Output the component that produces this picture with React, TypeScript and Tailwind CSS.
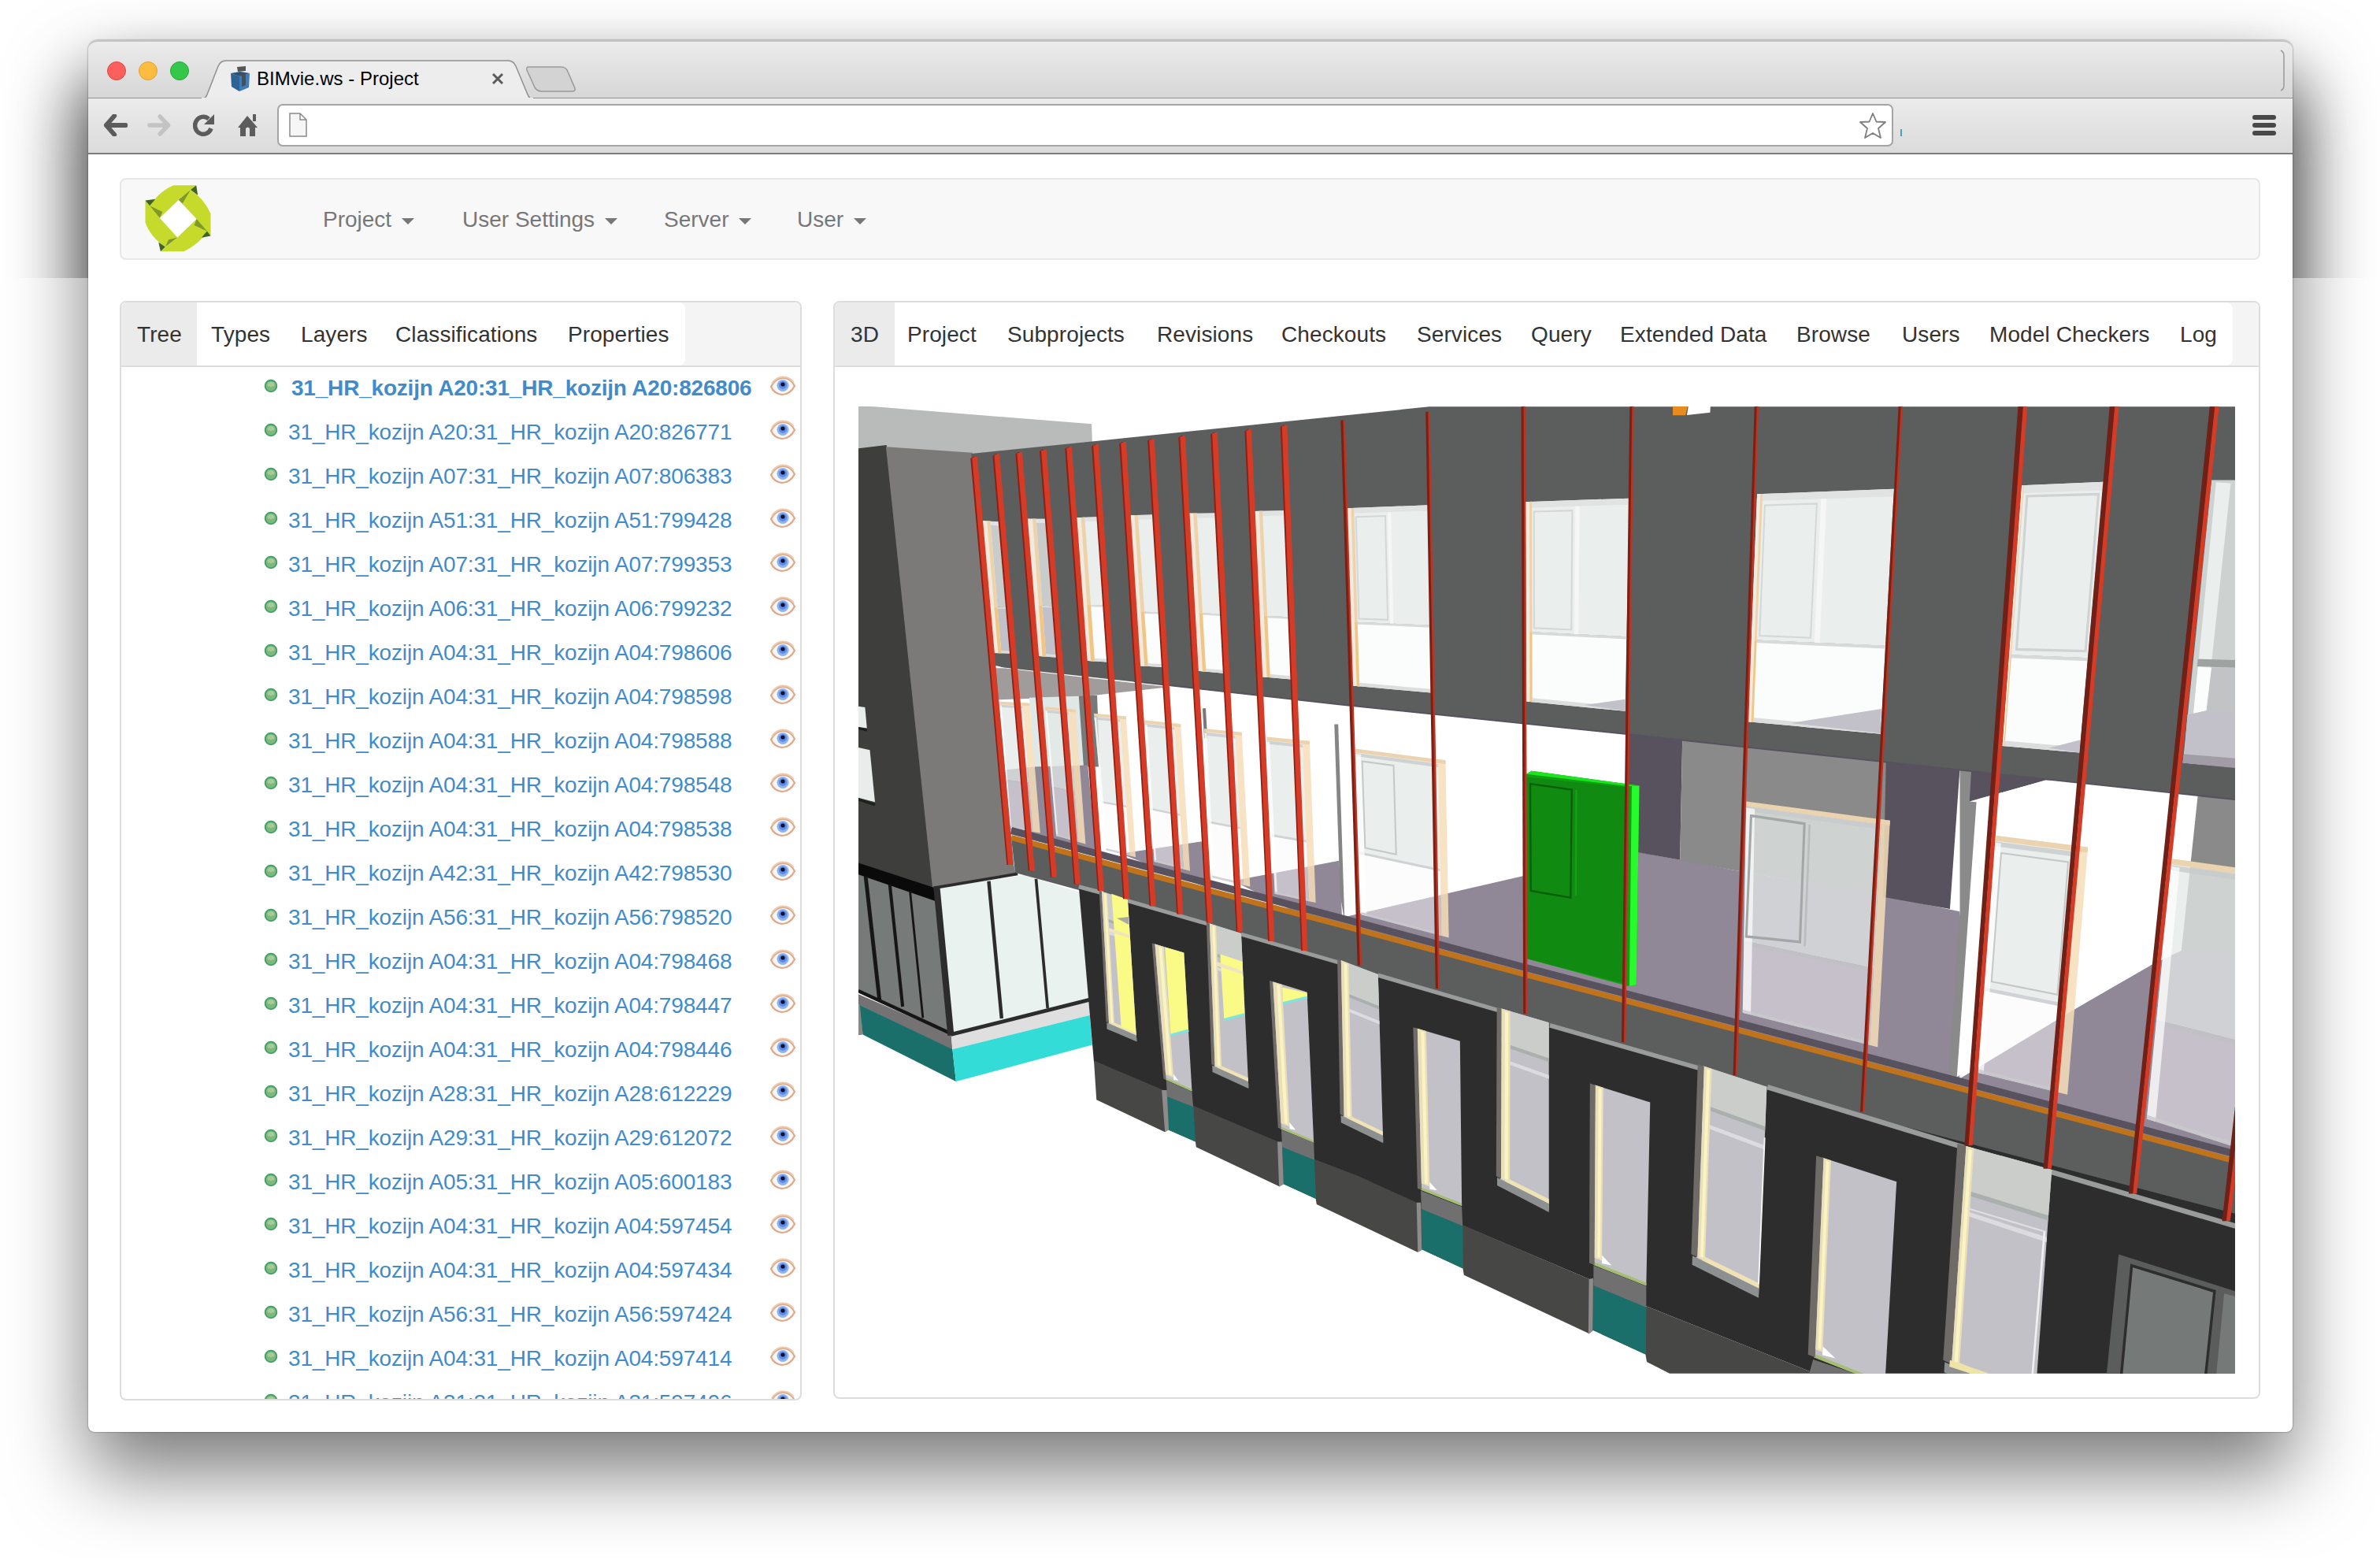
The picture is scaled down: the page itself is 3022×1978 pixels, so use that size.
import React from "react";

type Pt = [number, number];
type Quad = [Pt, Pt, Pt, Pt];

const rows: string[] = [
  "A20:826806", "A20:826771", "A07:806383", "A51:799428", "A07:799353", "A06:799232",
  "A04:798606", "A04:798598", "A04:798588", "A04:798548", "A04:798538", "A42:798530",
  "A56:798520", "A04:798468", "A04:798447", "A04:798446", "A28:612229", "A29:612072",
  "A05:600183", "A04:597454", "A04:597434", "A56:597424", "A04:597414", "A31:597406",
];

const Poly = ({ f, p, s, w }: { f: string; p: string; s?: string; w?: number }) => (
  <polygon points={p} fill={f} stroke={s} strokeWidth={w} />
);
const Line = ({ c, p, w }: { c: string; p: string; w: number }) => (
  <polyline points={p} fill="none" stroke={c} strokeWidth={w} />
);

/* Point inside a quad at fractions u (across) and v (down). */
const at = (q: Quad, u: number, v: number): Pt => {
  const [tl, tr, br, bl] = q;
  const m = (i: 0 | 1) =>
    (1 - v) * ((1 - u) * tl[i] + u * tr[i]) + v * ((1 - u) * bl[i] + u * br[i]);
  return [m(0), m(1)];
};
const sub = (q: Quad, u0: number, v0: number, u1: number, v1: number) =>
  [at(q, u0, v0), at(q, u1, v0), at(q, u1, v1), at(q, u0, v1)].map((a) => a.join(",")).join(" ");

/* Window in the upper facade: glass over parapet, wooden jamb at the left. */
const Upper = ({ q, mid = 0.65, jamb = 0.1, glass = "#eaeeed", low = "#fbfdfc", door = 0 }: {
  q: Quad; mid?: number; jamb?: number; glass?: string; low?: string; door?: number;
}) => (
  <g>
    <Poly f={glass} p={sub(q, 0, 0, 1, mid)} />
    <Poly f={low} p={sub(q, 0, mid, 1, 1)} />
    <Poly f="#e0e3e2" p={sub(q, 0, 0, 1, 0.03)} />
    <Poly f="#d6dad9" p={sub(q, 0, mid, 1, mid + 0.012)} />
    <Poly f="#dcdedd" p={sub(q, 0, 0.98, 1, 1)} />
    <Poly f="#f3e9dc" p={sub(q, 0, 0, jamb, 1)} />
    <Poly f="#ecd3ac" p={sub(q, jamb * 0.6, 0, jamb, mid)} />
    <Poly f="#f1c685" p={sub(q, jamb * 0.6, mid, jamb, 1)} />
    {door > 0 && (
      <g>
        <polygon points={sub(q, jamb + 0.02, 0.05, door, mid - 0.02)} fill="none" stroke="#d3d7d6" strokeWidth={5} />
        <Poly f="#f5f7f6" p={sub(q, door + 0.03, 0.03, door + 0.07, mid)} />
      </g>
    )}
  </g>
);

/* Window on the recessed storey: translucent, wooden frame on top and at the right. */
const Recessed = ({ q, mid = 0.62, side = 0.2, door = 0 }: { q: Quad; mid?: number; side?: number; door?: number }) => (
  <g>
    <Poly f="rgba(227,233,231,.76)" p={sub(q, 0, 0.02, 1 - side, mid)} />
    <Poly f="rgba(249,250,252,.5)" p={sub(q, 0, mid, 1 - side, 1)} />
    <Poly f="rgba(190,193,195,.7)" p={sub(q, 0, mid, 1 - side, mid + 0.015)} />
    <Poly f="rgba(200,203,204,.8)" p={sub(q, 0, 0.025, 1 - side, 0.045)} />
    <Poly f="rgba(255,255,255,.7)" p={sub(q, 0, 0.03, 0.06, 1)} />
    <Poly f="rgba(200,200,205,.8)" p={sub(q, 0, 0.985, 1 - side, 1)} />
    <Poly f="rgba(246,222,186,.85)" p={sub(q, 1 - side, 0, 1, 1)} />
    <Poly f="#ead3ae" p={sub(q, 0, 0, 1, 0.022)} />
    {door > 0 && (
      <polygon points={sub(q, 0.07, 0.07, door, mid - 0.03)} fill="none" stroke="#c3c8c7" strokeWidth={5} />
    )}
  </g>
);

/* Opening in the dark plinth storey. */
const Lower = ({ q, kind, jamb = 0.22 }: { q: Quad; kind: "door" | "window"; jamb?: number }) => (
  <g>
    <Poly f="#c3c1c8" p={sub(q, 0, 0, 1, 1)} />
    {kind === "window" && (
      <g>
        <Poly f="#cacdca" p={sub(q, 0, 0, 1, 0.19)} />
        <Poly f="#aab0ae" p={sub(q, 0, 0.19, 1, 0.21)} />
        <Poly f="#dcdbdf" p={sub(q, 0, 0.28, 1, 0.3)} />
        <Poly f="#efe2b4" p={sub(q, 0.1, 0.94, 1, 0.965)} />
        <Poly f="#8c9090" p={sub(q, -0.06, 0.965, 1, 1.01)} />
      </g>
    )}
    {kind === "door" && <Poly f="#a6bd74" p={sub(q, 0, 0.985, 1, 1.002)} />}
    <Poly f="#6e6b68" p={sub(q, -0.08, 0, 0.02, kind === "door" ? 1 : 0.96)} />
    <Poly f="#e9dfb8" p={sub(q, 0.02, 0, jamb, 0.96)} />
    <Poly f="#faf3c4" p={sub(q, jamb * 0.45, 0.01, jamb * 0.8, 0.95)} />
    {kind === "door" && (
      <polygon points={[at(q, jamb, 0.93), at(q, jamb + 0.18, 0.965), at(q, jamb, 0.975)].map((a) => a.join(",")).join(" ")} fill="#fff" />
    )}
  </g>
);

const wideBeams: [Pt, Pt][] = [
  [[384, 198], [496, 1465]], [[453, 190], [563, 1483]], [[524, 184], [632, 1503]],
  [[599, 176], [705, 1525]], [[678, 168], [779, 1546]], [[761, 160], [858, 1571]],
  [[847, 152], [940, 1593]], [[935, 143], [1025, 1618]], [[1031, 133], [1117, 1645]],
  [[1131, 123], [1210, 1673]], [[1237, 113], [1309, 1702]], [[1348, 100], [1412, 1732]],
];
const thinBeams: [Pt, Pt][] = [
  [[13, 82], [69, 1778]], [[295, 56], [328, 1850]], [[612, 40], [619, 1928]],
  [[972, 40], [945, 2017]], [[1386, 40], [1315, 2120]], [[1864, 40], [1737, 2233]],
];
const thickBeams: [Pt, Pt][] = [
  [[753, 40], [574, 2338]], [[1057, 40], [836, 2410]], [[1389, 40], [1119, 2488]], [[1474, 2210], [1429, 2573]],
];

const A = "translate(1080 500) scale(.408163)";
const B = "translate(1700 500) scale(.382653 .408163)";
const C = "translate(2280 500) scale(.382653 .408163)";
const D = "translate(1080 1080) scale(.408163)";
const E = "translate(1700 1130) scale(.382653 .408163)";
const F = "translate(2280 1130) scale(.382653 .408163)";

const rail = "1284,1063.4 1431,1103 1700,1173.9 1933,1236.3 2205,1307.3 2500,1384.9 2838,1474";

const Building = () => (
  <svg width="1748" height="1228" viewBox="1090 516 1748 1228" className="block">
    <rect x="1090" y="516" width="1748" height="1228" fill="#fff" />
    {/* rooms behind the recessed storey */}
    <g transform={A}>
      <Poly f="#9f9c9b" p="450,850 990,912 720,942 450,952" />
      <Poly f="#dfe8e6" p="556,945 712,940 728,1158 572,1162" />
      <Poly f="#777a79" p="710,940 767,938 775,1160 725,1160" />
      <Poly f="#908797" p="480,1170 570,1160 738,1155 765,1440 500,1370" />
      <Poly f="#908797" p="840,1430 1095,1392 1120,1540" />
      <Poly f="#908797" p="1190,1515 1520,1452 1530,1650 1440,1640" />
      <Poly f="#777a79" p="1095,978 1105,978 1110,1070 1100,1070" />
      <Poly f="#858585" p="1505,1028 1517,1028 1537,1640 1523,1560" />
    </g>
    <g transform={B}>
      <Poly f="#908797" p="0,1640 30,1625 610,1500 965,1420 1132,1450 1330,1485 1816,1562 2060,1610 2060,2130 2740,1745 2980,1700 2980,2400 1330,2010 0,1680" />
      <Poly f="#57525e" p="955,1052 1140,1072 1132,1450 955,1420" />
      <Poly f="#8a8a8a" p="1140,1072 1820,1140 1806,1562 1330,1485 1132,1452" />
    </g>
    <g transform={C}>
      <Poly f="#57525e" p="300,1140 545,1165 512,1602 290,1565" />
      <Poly f="#8a8a8a" p="545,1165 583,1170 606,1265 540,2124 508,2118 545,1610" />
      <Poly f="#57525e" p="583,1170 970,1205 830,1202 577,1268" />
      <Poly f="#fff" p="577,1268 830,1202 960,1208 1335,1245 1280,1732 1180,1777 535,2125 600,1270" />
      <Poly f="#8a8a8a" p="1335,1245 1460,1255 1460,1740 1280,1732" />
      <Poly f="#908797" p="1280,1732 1460,1738 1460,2340 1130,2260 1180,1777" />
    </g>
    {/* recessed windows */}
    <g transform={A}>
      <Recessed q={[[463, 957], [557, 962], [590, 1366], [495, 1350]]} side={0.24} />
      <Recessed q={[[605, 973], [700, 982], [731, 1400], [640, 1375]]} side={0.24} />
      <Recessed q={[[757, 994], [857, 1003], [887, 1441], [795, 1420]]} side={0.2} mid={0.64} />
      <Recessed q={[[915, 1015], [1027, 1027], [1056, 1484], [945, 1455]]} side={0.18} />
      <Recessed q={[[1100, 1041], [1217, 1053], [1243, 1533], [1125, 1505]]} side={0.18} />
      <Recessed q={[[1295, 1067], [1428, 1080], [1447, 1583], [1320, 1555]]} side={0.17} />
    </g>
    <g transform={B}>
      <Recessed q={[[55, 1104], [354, 1140], [365, 1692], [75, 1620]]} side={0.085} door={0.42} />
      <Recessed q={[[1352, 1268], [1829, 1327], [1788, 2032], [1340, 1925]]} side={0.06} mid={0.66} />
      <polygon points="1368,1312 1545,1337 1530,1705 1352,1688" fill="none" stroke="#a3a8a7" strokeWidth="8" />
      <Line c="#b9bdbc" w={7} p="1562,1340 1546,1718" />
      <Poly f="#119e13" p="622,1183 640,1173 997,1219 987,1838 958,1842 625,1757" />
      <Poly f="#118a12" p="622,1192 950,1224 950,1835 625,1757" />
      <Poly f="#1be51e" p="622,1183 640,1173 997,1219 962,1221" />
      <Poly f="#27fb2c" p="972,1221 997,1219 987,1838 964,1842" />
      <polygon points="635,1213 773,1231 769,1567 637,1546" fill="none" stroke="#085e09" strokeWidth="6" />
      <Line c="#16a018" w={6} p="788,1232 786,1560" />
    </g>
    <g transform={C}>
      <Recessed q={[[665, 1374], [970, 1410], [902, 2180], [606, 2112]]} side={0.11} mid={0.64} door={0.8} />
      <Recessed q={[[1250, 1446], [1700, 1505], [1650, 2400], [1165, 2255]]} side={0.05} mid={0.62} />
    </g>
    {/* upper facade */}
    <g transform={A}>
      <Poly f="#b8bbba" p="24,38 75,40 750,94 752,160 380,190 110,170 24,172" />
      <Poly f="#3e3e3c" p="24,170 112,159 258,1540 24,1465" />
      <Poly f="#7c7a78" p="110,165 378,183 392,200 508,1465 514,1497 255,1538" />
      <Poly f="#e8ecea" p="24,972 45,975 51,1040 24,1036" />
      <Poly f="#e8ecea" p="24,1100 60,1108 76,1270 24,1256" />
      <Line c="#1f1f1d" w={8} p="24,1262 76,1278" />
      <Line c="#1f1f1d" w={8} p="24,1040 51,1046" />
    </g>
    <g transform={B}>
      <Poly f="#5c5e5d" p="-1220,186 -820,148 300,40 2974,40 2974,1262 1345,1098 950,1058 0,966 -1142,848" />
      <Line c="#57525e" w={5} p="-680,894 0,966 950,1058 1345,1098 2974,1262" />
      <Poly f="#e88c22" p="1108,38 1158,38 1150,67 1108,67" />
      <Poly f="#fff" p="1160,38 1233,38 1232,58 1155,66" />
    </g>
    <g transform={A}>
      <Upper q={[[408, 395], [468, 398], [500, 808], [444, 806]]} jamb={0.45} glass="#c8cccb" low="#c2c0c8" />
      <Upper q={[[550, 389], [610, 389], [642, 820], [580, 815]]} jamb={0.45} mid={0.63} glass="#c8cccb" low="#c2c0c8" />
      <Upper q={[[700, 385], [768, 383], [800, 834], [730, 830]]} jamb={0.42} mid={0.61} />
      <Upper q={[[866, 378], [940, 376], [970, 850], [898, 846]]} jamb={0.38} mid={0.64} />
      <Upper q={[[1050, 372], [1135, 371], [1160, 869], [1080, 862]]} jamb={0.32} mid={0.63} />
      <Upper q={[[1255, 365], [1350, 363], [1370, 888], [1280, 880]]} jamb={0.28} mid={0.63} />
      <Poly f="#fff" p="452,845 480,853 452,853" />
    </g>
    <g transform={B}>
      <Upper q={[[26, 356], [297, 346], [306, 930], [45, 908]]} door={0.47} mid={0.64} jamb={0.09} />
      <Upper q={[[620, 336], [964, 325], [950, 987], [622, 957]]} door={0.45} mid={0.65} jamb={0.06} />
      <Poly f="#c2c0c8" p="815,968 950,950 950,986" />
      <Upper q={[[1388, 312], [1842, 296], [1798, 1058], [1358, 1020]]} door={0.44} mid={0.64} jamb={0.04} />
      <Poly f="#c2c0c8" p="1500,1024 1800,980 1798,1056" />
    </g>
    <g transform={C}>
      <Upper q={[[750, 285], [1022, 274], [942, 1116], [686, 1095]]} mid={0.65} jamb={0.03} />
      <polygon points="768,318 1005,312 962,800 733,795" fill="none" stroke="#cfd3d2" strokeWidth="8" />
      <Poly f="#c2c0c8" p="840,1102 945,1076 942,1116" />
      <Poly f="#cdd1d0" p="1380,268 1460,268 1460,1162 1285,1148" />
      <Poly f="#eaeeed" p="1395,275 1444,278 1363,985 1320,995" />
      <Poly f="#9ea2a1" p="1335,825 1460,828 1460,852 1332,848" />
      <Poly f="#c2c3c4" p="1378,852 1460,852 1460,990 1363,985" />
      <Poly f="#fbfdfc" p="1335,850 1380,852 1363,985 1320,995" />
      <Poly f="#c2c0c8" p="1300,998 1370,984 1460,990 1460,1135 1290,1120" />
      <Poly f="#a29ca6" p="1288,1120 1460,1134 1460,1164 1284,1148" />
    </g>
    {/* glazed corner pavilion */}
    <g transform={D}>
      <Poly f="#767a78" p="24,60 264,150 302,562 24,437" />
      <Poly f="#0a0a0a" p="24,38 262,116 264,157 24,74" />
      <Line c="#161616" w={12} p="47,80 90,465" />
      <Line c="#161616" w={10} p="122,105 162,485" />
      <Line c="#161616" w={7} p="185,125 225,520" />
      <Poly f="#e9f2ef" p="270,116 540,76 715,130 742,470 318,570" />
      <Line c="#2c2c2c" w={11} p="430,95 470,522" />
      <Line c="#2c2c2c" w={9} p="577,88 613,490" />
      <Poly f="#747272" p="24,446 313,572 317,620 24,478" />
      <Poly f="#888" p="24,478 32,480 38,572 24,574" />
      <Poly f="#1a6f6b" p="29,480 317,618 328,718 38,572" />
      <Poly f="#dfdfdf" p="313,576 742,470 744,514 317,620" />
      <Poly f="#33dcd7" p="317,618 744,512 752,604 328,718" />
      <Line c="#161616" w={11} p="24,436 310,568" />
      <Line c="#2c2c2c" w={12} p="312,572 742,464" />
      <Line c="#2c2c2c" w={9} p="258,116 520,72" />
      <Line c="#2c2c2c" w={20} p="268,114 312,575" />
    </g>
    {/* balcony edge */}
    <polygon
      points={rail + " 2838,1556 2605,1488 2492,1458 2280,1392 2159,1358 1903,1285 1696,1224 1533,1177 1370,1130 1289,1108"}
      fill="#5c5e5d"
    />
    <polyline points={rail} fill="none" stroke="#57525e" strokeWidth="9" transform="translate(0 -9)" />
    <polyline points={rail} fill="none" stroke="#c0731a" strokeWidth="7" />
    {/* plinth storey */}
    <g transform={D}>
      <Poly f="#2d2d2d" p="710,112 1110,228 1520,350 2017,498 2646,680 3230,845 4500,1180 4500,1626 3000,1626 2475,1417 2297,1332 1905,1166 1568,1012 1443,962 1330,907 1066,797 757,657" />
      <Poly f="#474745" p="757,653 972,744 1066,793 1330,905 1443,960 1575,1010 1767,1097 1905,1165 2297,1332 2475,1417 3000,1626 2548,1626 2477,1590 2473,1567 2310,1492 2297,1502 1908,1320 1905,1300 1776,1240 1764,1249 1450,1100 1447,1083 1345,1035 1335,1045 1075,922 1073,905 988,868 978,875 765,775" />
      <Line c="#9a9c9b" w={13} p="710,112 785,132" />
      <Line c="#9a9c9b" w={12} p="862,156 1115,229" />
      <Line c="#9a9c9b" w={12} p="1215,260 1522,349" />
      <Lower kind="window" q={[[780, 127], [862, 152], [890, 590], [803, 552]]} />
      <Poly f="#fafa86" p="812,134 862,152 888,566 842,548" />
      <Poly f="#efe3c0" p="803,240 868,262 868,272 803,252" />
      <Poly f="#a8aaa0" p="828,210 865,206 866,230" />
      <Poly f="#8c9090" p="798,545 890,584 890,592 798,555" />
      <Lower kind="door" q={[[945, 290], [1037, 317], [1062, 748], [980, 712]]} jamb={0.32} />
      <Poly f="#fafa86" p="978,300 1037,317 1051,556 996,572" />
      <Line c="#7fe3e0" w={8} p="995,574 1052,559" />
      <Lower kind="window" q={[[1115, 226], [1215, 257], [1238, 735], [1132, 687]]} />
      <Poly f="#fafa86" p="1150,322 1219,345 1226,508 1162,525" />
      <Poly f="#efe3c0" p="1138,345 1220,375 1220,385 1138,358" />
      <Line c="#7fe3e0" w={8} p="1162,526 1226,509" />
      <Lower kind="door" q={[[1312, 407], [1420, 440], [1441, 908], [1338, 865]]} jamb={0.28} />
      <Poly f="#fafa86" p="1343,425 1420,442 1421,454 1345,472" />
      <Line c="#7fe3e0" w={8} p="1345,475 1421,456" />
      <Poly f="#707070" p="982,715 1062,750 1066,798 985,766" />
      <Poly f="#1a6f6b" p="985,765 1067,797 1073,905 988,868" />
      <Poly f="#8f8b8b" p="968,745 984,745 990,868 978,875" />
      <Poly f="#707070" p="1340,868 1441,908 1443,963 1343,924" />
      <Poly f="#1a6f6b" p="1343,922 1443,962 1448,1083 1346,1037" />
      <Poly f="#8f8b8b" p="1328,905 1342,905 1347,1038 1333,1045" />
    </g>
    <g transform={E}>
      <Line c="#9a9c9b" w={13} p="130,265 532,375" />
      <Line c="#9a9c9b" w={14} p="700,421 1203,556" />
      <Line c="#9a9c9b" w={16} p="1422,613 2073,800" />
      <Lower kind="window" q={[[5, 218], [130, 262], [147, 782], [15, 722]]} />
      <Lower kind="door" q={[[258, 430], [402, 470], [408, 982], [272, 932]]} />
      <Lower kind="window" q={[[537, 368], [697, 412], [697, 996], [535, 918]]} jamb={0.2} />
      <Lower kind="door" q={[[848, 606], [1033, 660], [1020, 1230], [845, 1165]]} jamb={0.16} />
      <Lower kind="window" q={[[1208, 547], [1420, 612], [1393, 1262], [1185, 1165]]} jamb={0.14} />
      <Poly f="#707070" p="272,935 408,985 411,1046 274,993" />
      <Poly f="#1a6f6b" p="274,992 411,1045 413,1177 275,1118" />
      <Poly f="#8f8b8b" p="258,972 272,972 275,1120 262,1127" />
      <Poly f="#707070" p="845,1168 1020,1232 1020,1299 845,1231" />
      <Poly f="#1a6f6b" p="845,1230 1020,1298 1019,1445 842,1368" />
      <Poly f="#8f8b8b" p="830,1210 844,1207 842,1372 828,1382" />
      <Line c="#f5f5f5" w={5} p="1413,770 1393,1225" />
    </g>
    <g transform={F}>
      <Line c="#9a9c9b" w={16} p="848,877 1460,1045" />
      <Lower kind="door" q={[[88, 832], [335, 907], [296, 1540], [60, 1452]]} jamb={0.12} />
      <Poly f="#707070" p="58,1460 200,1505 45,1505" />
      <Lower kind="window" q={[[560, 795], [850, 870], [792, 1620], [510, 1500]]} jamb={0.11} />
      <Line c="#f0f0f0" w={7} p="826,1060 786,1505" />
      <Line c="#e0dfe3" w={5} p="570,990 826,1062" />
      <Poly f="#eee4a8" p="512,1462 640,1503 600,1510 510,1482" />
      <Poly f="#5b5d5c" p="1072,1133 1460,1248 1460,1505 1032,1505" />
      <Poly f="#757977" s="#2d2d2d" w={9} p="1115,1168 1390,1248 1360,1515 1080,1515" />
      <Poly f="#757977" p="1422,1255 1460,1264 1460,1505 1396,1505" />
    </g>
    {/* vertical fins */}
    <g transform={A}>
      {wideBeams.map(([t, b], i) => (
        <g key={i}>
          <Poly f="#8e2116" p={`${t[0] - 11},${t[1] + 3} ${t[0]},${t[1] - 4} ${b[0]},${b[1]} ${b[0] - 10},${b[1]}`} />
          <Poly f="#d43c27" p={`${t[0] - 6},${t[1] + 1} ${t[0] + 10},${t[1] - 4} ${b[0] + 10},${b[1]} ${b[0] - 6},${b[1]}`} />
        </g>
      ))}
    </g>
    <g transform={B}>
      {thinBeams.map(([t, b], i) => (
        <g key={i}>
          <Poly f="#7c2015" p={`${t[0] - 7},${t[1]} ${t[0] + 3},${t[1]} ${b[0] + 3},${b[1]} ${b[0] - 7},${b[1]}`} />
          <Poly f="#bd3423" p={`${t[0] + 1},${t[1]} ${t[0] + 7},${t[1]} ${b[0] + 7},${b[1]} ${b[0] + 1},${b[1]}`} />
        </g>
      ))}
    </g>
    <g transform={C}>
      {thickBeams.map(([t, b], i) => (
        <g key={i}>
          <Poly f="#6f2117" p={`${t[0] - 15},${t[1]} ${t[0] + 3},${t[1]} ${b[0] + 1},${b[1]} ${b[0] - 14},${b[1]}`} />
          <Poly f="#d43c27" p={`${t[0] + 2},${t[1]} ${t[0] + 16},${t[1]} ${b[0] + 13},${b[1]} ${b[0]},${b[1]}`} />
        </g>
      ))}
    </g>
  </svg>
);

const Logo = () => (
  <svg width="84" height="85" viewBox="359 704 165 253" preserveAspectRatio="none" className="-mt-[2px] block">
    <Poly f="#fff" p="443,760 490,832 440,902 396,828" />
    <path d="M371,782 Q395,728 430,705 H487 L443,760 L396,828 Z" fill="#c6da2c" />
    <path d="M473,722 Q508,758 523,812 V896 L488,832 L443,760 Z" fill="#c6da2c" />
    <path d="M515,880 Q492,928 456,955 H398 L440,902 L488,832 Z" fill="#c6da2c" />
    <path d="M360,762 L396,828 L440,902 L410,938 Q372,900 360,845 Z" fill="#c6da2c" />
    <Poly f="#3f6424" p="487,705 491,742 473,722" />
    <Poly f="#3f6424" p="360,762 385,757 371,782" />
    <Poly f="#3f6424" p="523,896 500,903 514,878" />
    <Poly f="#3f6424" p="398,955 393,920 410,938" />
    <Poly f="#7d9a28" p="473,722 443,760 453,773" />
    <Poly f="#7d9a28" p="371,782 396,828 403,805" />
    <Poly f="#7d9a28" p="488,832 514,878 482,856" />
    <Poly f="#7d9a28" p="440,902 410,938 418,910" />
  </svg>
);

const Eye = () => (
  <svg width="32" height="26" viewBox="0 0 32 26" className="block">
    <path d="M1,14 Q7,3 16,3 Q26,3 31,13 Q25,24 15,24 Q5,23 1,14 Z" fill="#f7f8fb" stroke="#dfa884" strokeWidth="2.2" />
    <path d="M2,10 Q8,1.5 16,1.5 Q25,1.5 30,9" fill="none" stroke="#e9c9ae" strokeWidth="2" />
    <circle cx="16" cy="12.5" r="7.5" fill="#8fb2ef" />
    <circle cx="16" cy="12" r="5" fill="#5e8be6" />
    <circle cx="16" cy="11" r="2.6" fill="#0b1230" />
  </svg>
);

const Bullet = () => (
  <svg width="18" height="18" viewBox="0 0 18 18" className="block">
    <circle cx="9" cy="9" r="7.3" fill="#7fb87c" stroke="#45a169" strokeWidth="2" />
    <ellipse cx="9" cy="7" rx="4.5" ry="3" fill="#a3cd97" />
  </svg>
);

const menus: [string, string][] = [
  ["Project", "w-[177px]"], ["User Settings", "w-[256px]"], ["Server", "w-[169px]"], ["User", "w-[120px]"],
];
const leftTabs: [string, string][] = [
  ["Tree", "w-[96px] pl-[20px] bg-[#ebebeb]"], ["Types", "w-[114px] pl-[18px]"], ["Layers", "w-[121px] pl-[18px]"],
  ["Classifications", "w-[219px] pl-[17px]"], ["Properties", "w-[166px] pl-[17px]"],
];
const rightTabs: [string, string][] = [
  ["3D", "w-[76px] pl-[20px] bg-[#ebebeb]"], ["Project", "w-[127px] pl-[16px]"], ["Subprojects", "w-[190px] pl-[16px]"],
  ["Revisions", "w-[158px] pl-[16px]"], ["Checkouts", "w-[172px] pl-[16px]"], ["Services", "w-[145px] pl-[16px]"],
  ["Query", "w-[112px] pl-[16px]"], ["Extended Data", "w-[224px] pl-[17px]"], ["Browse", "w-[134px] pl-[17px]"],
  ["Users", "w-[111px] pl-[17px]"], ["Model Checkers", "w-[242px] pl-[17px]"], ["Log", "w-[84px] pl-[17px]"],
];

const Tabs = ({ items }: { items: [string, string][] }) => (
  <div className="flex h-[82px] shrink-0 border-b-2 border-[#dddddd] bg-[#f4f4f4]">
    <div className="flex overflow-hidden rounded-r-lg bg-white">
      {items.map(([t, c]) => (
        <div key={t} className={"h-[80px] shrink-0 tracking-[0.1px] whitespace-nowrap leading-[82px] " + c}>{t}</div>
      ))}
    </div>
  </div>
);

export default function App() {
  return (
    <div className="relative h-[1978px] w-[3022px] overflow-hidden bg-white px-[112px] pt-[51px] font-['Liberation_Sans',Arial,sans-serif] text-[28px] text-[#333333]">
      <div className="absolute inset-x-0 top-0 h-[353px] overflow-hidden px-[112px] pt-[51px]">
        <div className="h-[1767px] w-[2799px] rounded-[10px] shadow-[0_60px_90px_rgba(0,0,0,0.58)]" />
      </div>
      <div className="relative flex h-[1767px] w-[2799px] flex-col rounded-t-[12px] rounded-b-[8px] bg-white shadow-[0_0_2px_rgba(0,0,0,0.6),0_50px_100px_rgba(0,0,0,0.53)]">
        {/* tab strip */}
        <div className="flex h-[74px] shrink-0 rounded-t-[12px] border-t-2 border-[#c4c4c4] bg-linear-to-b from-[#ececec] to-[#d6d6d6]">
          <div className="flex w-[142px] gap-4 pt-[25px] pl-6">
            <div className="size-6 rounded-full border border-[#e2443f] bg-[#fc605c]" />
            <div className="size-6 rounded-full border border-[#dfa133] bg-[#fdbc40]" />
            <div className="size-6 rounded-full border border-[#27a737] bg-[#34c84a]" />
          </div>
          <div className="relative h-[74px] w-[424px]">
            <svg width="424" height="74" viewBox="0 0 424 74" className="absolute top-0 left-0">
              <path d="M0,73 Q7,73 9,67 L23,31 Q26,24 33,24 H391 Q398,24 401,31 L416,67 Q418,73 424,73" fill="#ededed" stroke="#8f8f8f" strokeWidth="1.5" />
            </svg>
            <div className="relative flex h-[72px] items-center pt-[22px] pl-[39px] text-[24px] text-black">
              <svg width="24" height="32" viewBox="0 0 24 32" className="block">
                <Poly f="#555" p="8,1 19,0 19,6 9,7" />
                <Poly f="#2f6194" p="0,9 11,13 11,32 1,26" />
                <Poly f="#3f7db8" p="11,13 24,9 23,27 11,32" />
                <Poly f="#26507c" p="0,9 12,7 24,9 11,13" />
                <Poly f="#4c4f52" p="10,10 19,9 19,24 14,26 14,13" />
              </svg>
              <span className="ml-[9px] w-[299px] tracking-[0.02px] whitespace-nowrap">BIMvie.ws - Project</span>
              <svg width="14" height="14" viewBox="0 0 14 14" className="block">
                <path d="M1,1 L13,13 M13,1 L1,13" stroke="#5a5a5a" strokeWidth="3" />
              </svg>
            </div>
          </div>
          <svg width="66" height="36" viewBox="0 0 66 36" className="mt-[30px] -ml-[12px] block">
            <path d="M5,2 H46 Q53,2 55,8 L64,29 Q65,33 60,33 H22 Q16,33 13,28 L3,6 Q2,2 5,2 Z" fill="#d3d3d3" stroke="#999" strokeWidth="1.5" />
          </svg>
          <svg width="8" height="54" viewBox="0 0 8 54" className="mt-[10px] mr-[8px] ml-auto block">
            <path d="M1,1 Q5,3 5,8 V46 Q5,50 1,52" fill="none" stroke="#999" strokeWidth="1.5" />
          </svg>
        </div>
        {/* toolbar */}
        <div className="relative -mt-px flex h-[72px] shrink-0 items-center border-b-2 border-[#7c7c7c] bg-linear-to-b from-[#ececec] to-[#dbdbdb]">
          <div className="absolute top-0 left-0 h-px w-[144px] bg-[#8f8f8f]" />
          <div className="absolute top-0 right-0 left-[565px] h-px bg-[#8f8f8f]" />
          <svg width="31" height="28" viewBox="0 0 31 28" className="ml-[19px] block">
            <path d="M14,2 L3,14 L14,26 M3,14 H29" fill="none" stroke="#5c5c5c" strokeWidth="6" strokeLinejoin="round" strokeLinecap="round" transform="translate(1 0) scale(.95 1)" />
          </svg>
          <svg width="31" height="28" viewBox="0 0 31 28" className="ml-[24px] block">
            <path d="M17,3 L28,14 L17,25 M28,14 H3" fill="none" stroke="#c3c3c3" strokeWidth="5.5" strokeLinejoin="round" strokeLinecap="round" transform="translate(1 0) scale(.95 1)" />
          </svg>
          <svg width="28" height="28" viewBox="0 0 28 28" className="ml-[28px] block">
            <path d="M23,18 A10.5,11 0 1 1 20,6" fill="none" stroke="#5c5c5c" strokeWidth="5.5" />
            <path d="M27,0 V13 H14 Z" fill="#5c5c5c" />
          </svg>
          <svg width="26" height="28" viewBox="0 0 26 28" className="ml-[29px] block">
            <path d="M12,2 L25,17 H22 V28 H15 V18 Q12.500,15 10,18 V28 H3 V17 H0 Z" fill="#5c5c5c" />
            <rect x="19" y="0" width="4" height="9" fill="#5c5c5c" />
          </svg>
          <div className="ml-[24px] flex h-[54px] w-[2052px] items-center rounded-[7px] border-2 border-[#a4a4a4] bg-white">
            <svg width="24" height="32" viewBox="0 0 24 32" className="ml-[13px] block">
              <path d="M1,1 H14 L22,9 V30 H1 Z M14,1 V9 H22" fill="#f6f6f6" stroke="#8a8a8a" strokeWidth="1.5" />
            </svg>
            <svg width="36" height="35" viewBox="0 0 36 35" className="mr-[6px] ml-auto block">
              <path d="M18,2 L22.500,12.500 L34,13 L25,21 L28,33 L18,27 L8,33 L11,21 L2,13 L13.500,12.500 Z" fill="#fff" stroke="#7d7d7d" strokeWidth="1.800" strokeLinejoin="round" />
            </svg>
          </div>
          <div className="mt-[18px] ml-[9px] h-[9px] w-[2px] bg-[#4d9dba]" />
          <div className="mr-[21px] ml-auto flex flex-col gap-1">
            <div className="h-1.5 w-[30px] rounded-[3px] bg-[#484848]" />
            <div className="h-1.5 w-[30px] rounded-[3px] bg-[#484848]" />
            <div className="h-1.5 w-[30px] rounded-[3px] bg-[#484848]" />
          </div>
        </div>
        {/* page */}
        <div className="flex flex-col pt-[30px] pl-[40px]">
          <div className="flex h-[104px] w-[2718px] items-center rounded-lg border-2 border-[#e7e7e7] bg-[#f8f8f8] pl-[30px] text-[#777777]">
            <Logo />
            <div className="mt-[2px] ml-[142px] flex">
              {menus.map(([t, c]) => (
                <div key={t} className={"flex shrink-0 items-center whitespace-nowrap " + c}>
                  {t}
                  <span className="mt-[3px] ml-[13px] border-x-8 border-t-8 border-x-transparent border-t-[#777777]" />
                </div>
              ))}
            </div>
          </div>
          <div className="mt-[52px] flex gap-[40px]">
            <div className="flex h-[1396px] w-[866px] flex-col overflow-hidden rounded-lg border-2 border-[#dddddd]">
              <Tabs items={leftTabs} />
              <div className="-mt-[1px] flex min-h-0 flex-col overflow-hidden text-[#428bca]">
                {rows.map((r, i) => (
                  <div key={r} className="flex h-[56px] shrink-0 items-center pl-[181px]">
                    <div className="mb-[6px] w-[31px]"><Bullet /></div>
                    <span className={i === 0 ? "w-[611px] pl-[4px] font-bold tracking-[-0.2px] whitespace-nowrap" : "w-[611px] tracking-[-0.16px] whitespace-nowrap"}>
                      {`31_HR_kozijn ${r.slice(0, 4)}31_HR_kozijn ${r}`}
                    </span>
                    <div className="mb-[6px] ml-[1px]"><Eye /></div>
                  </div>
                ))}
              </div>
            </div>
            <div className="flex h-[1394px] w-[1812px] flex-col overflow-hidden rounded-lg border-2 border-[#dddddd]">
              <Tabs items={rightTabs} />
              <div className="pt-[50px] pl-[30px]"><Building /></div>
            </div>
          </div>
        </div>
      </div>
    </div>
  );
}
